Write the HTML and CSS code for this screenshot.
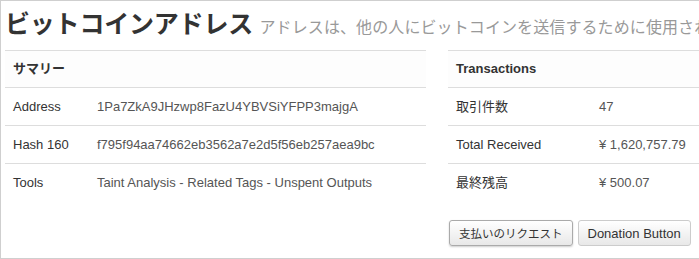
FILE: index.html
```html
<!DOCTYPE html>
<html lang="ja">
<head>
    <meta charset="UTF-8" />
    <meta name="viewport" content="width=device-width, initial-scale=1.0" />
    <title>ビットコインアドレス</title>
    <link rel="stylesheet" href="styles.css">
</head>
<body>
  <div class="frame">
    <div class="page-header">
      <h1>ビットコインアドレス <small>アドレスは、他の人にビットコインを送信するために使用されます</small></h1>
    </div>

    <div class="row">
      <!-- summary -->
      <div class="col-left">
        <table class="info">
          <tr><th colspan="2">サマリー</th></tr>
          <tr><td class="label">Address</td><td>1Pa7ZkA9JHzwp8FazU4YBVSiYFPP3majgA</td></tr>
          <tr><td class="label">Hash 160</td><td>f795f94aa74662eb3562a7e2d5f56eb257aea9bc</td></tr>
          <tr><td class="label">Tools</td><td>Taint Analysis - Related Tags - Unspent Outputs</td></tr>
        </table>
      </div>

      <!-- transactions -->
      <div class="col-right">
        <table class="info">
          <tr><th colspan="2">Transactions</th></tr>
          <tr><td class="label wide">取引件数</td><td>47</td></tr>
          <tr><td class="label wide">Total Received</td><td>¥ 1,620,757.79</td></tr>
          <tr><td class="label wide">最終残高</td><td>¥ 500.07</td></tr>
        </table>
        <div class="buttons">
          <button class="btn btn-jp active">支払いのリクエスト</button>
          <button class="btn">Donation Button</button>
        </div>
      </div>
    </div>
  </div>
</body>
</html>
```

FILE: styles.css
```css
body {
    margin: 0;
    font-family: "Liberation Sans", Arial, "Noto Sans CJK JP", sans-serif;
    font-size: 13px;
    color: #333;
    background: #fff;
}

.frame {
    width: 697px;
    height: 257px;
    border: 1px solid #cfcfcf;
    overflow: hidden;
    padding-left: 4px;
    box-sizing: content-box;
}

.page-header {
    height: 49px;
    white-space: nowrap;
    overflow: hidden;
}

    .page-header h1 {
        margin: 0;
        padding-top: 3px;
        font-family: "Noto Sans CJK JP", sans-serif;
        font-size: 25px;
        line-height: 36px;
        font-weight: bold;
        color: #333;
        letter-spacing: -0.2px;
    }

    .page-header small {
        font-size: 16px;
        font-weight: normal;
        color: #999;
        letter-spacing: 0.1px;
        margin-left: 1px;
    }

.row {
    display: grid;
    grid-template-columns: 421px 280px;
    column-gap: 22px;
}

table.info {
    width: 100%;
    border-collapse: collapse;
    border-top: 1px solid #ddd;
}

    table.info th,
    table.info td {
        text-align: left;
        padding: 8px 8px;
        line-height: 21px;
        border-bottom: 1px solid #ddd;
        white-space: nowrap;
    }

    table.info tr:last-child td {
        border-bottom: none;
    }

    table.info th {
        font-weight: bold;
        color: #333;
        background: #fdfdfd;
        line-height: 20px;
    }

    table.info td {
        color: #555;
    }

    table.info td.label {
        color: #333;
        width: 68px;
    }

    table.info td.wide {
        width: 127px;
    }

.buttons {
    display: flex;
    gap: 5px;
    margin-top: 19px;
    padding-left: 1px;
}

.btn {
    font-family: "Liberation Sans", Arial, "Noto Sans CJK JP", sans-serif;
    font-size: 13px;
    color: #333;
    height: 26px;
    padding: 0 9px;
    border: 1px solid #ccc;
    border-radius: 3px;
    background: linear-gradient(#ffffff, #e8e8e8);
    cursor: pointer;
}

.btn-jp {
    font-size: 11.5px;
}

    .btn.active {
        border-color: #aaa;
        box-shadow: 0 1px 2px rgba(0,0,0,0.2);
    }
```
